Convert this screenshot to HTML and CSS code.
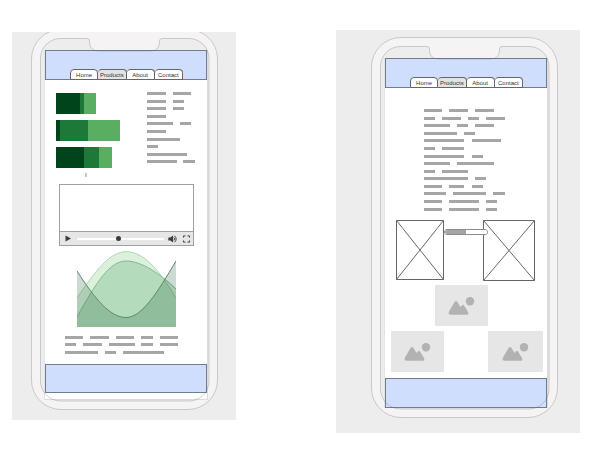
FILE: index.html
```html
<!DOCTYPE html>
<html lang="en">
<head>
<meta charset="utf-8">
<title>Mobile wireframes</title>
<link rel="stylesheet" href="styles.css">
</head>
<body>
<svg class="defs" aria-hidden="true">
  <symbol id="frame" viewBox="0 0 187 381" preserveAspectRatio="none">
    <path fill-rule="evenodd" d="M.5 30A29.500 29.500 0 0 1 30 .5H157A29.500 29.500 0 0 1 186.500 30V351A29.500 29.500 0 0 1 157 380.500H30A29.500 29.500 0 0 1 .5 351ZM9.500 29.500V352A20 20 0 0 0 29.500 372H158A20 20 0 0 0 178 352V29.500A20 20 0 0 0 158 9.500H131Q128.500 9.500 128.500 12Q129 22 119 22H68Q58 22 58.500 12Q58.500 9.500 56 9.500H29.500A20 20 0 0 0 9.500 29.500Z"/>
  </symbol>
  <symbol id="picture" viewBox="0 0 53 41">
    <path d="M14.500 29.500Q13 29 14 26.500L19.500 17Q21 14.800 22.500 17L25.500 22L27 20.300Q28 19.300 29 20.500L33 27Q34 29.500 32 29.800H15.500Z"/>
    <circle cx="35" cy="16.300" r="4.200"/>
  </symbol>
</svg>
<main class="canvas">
  <section class="artboard" aria-label="Products screen">
    <div class="phone phone-products">
      <svg class="shell" aria-hidden="true"><use href="#frame"/></svg>
      <div class="screen">
        <header class="bar">
          <nav class="tabs">
            <a class="tab" href="#home">Home</a>
            <a class="tab selected" href="#products">Products</a>
            <a class="tab" href="#about">About</a>
            <a class="tab" href="#contact">Contact</a>
          </nav>
        </header>
        <div class="summary">
          <svg class="bars" width="64" height="75" viewBox="0 0 64 75" role="img" aria-label="Stacked bars">
            <path class="g3" d="M0 0h24v21H0zM0 27h4v21H0zM0 54h28v21H0z"/>
            <path class="g2" d="M24 0h4v21h-4zM4 27h28v21H4zM28 54h15v21H28z"/>
            <path class="g1" d="M28 0h12v21H28zM32 27h32v21H32zM43 54h13v21H43z"/>
          </svg>
          <svg class="lines" width="48" height="77" viewBox="0 0 48 77" aria-hidden="true">
            <path d="M0 1.500h19m7 0h18M0 9.500h19m7 0h11M0 16.500h19m7 0h11M0 24.500h19M0 31.500h26m7 0h11M0 39.500h19M0 47.500h33M0 54.500h11M0 62.500h40M0 69.500h30m6 0h12"/>
          </svg>
        </div>
        <div class="caret">I</div>
        <div class="player">
          <div class="picture-area"></div>
          <div class="controls">
            <button class="icon" aria-label="Play"><svg width="6" height="7" viewBox="0 0 6 7"><path d="M.5 .5L6 3.500L.5 6.500z"/></svg></button>
            <input class="seek" type="range" min="0" max="100" value="48" aria-label="Position">
            <button class="icon" aria-label="Volume"><svg width="9" height="8" viewBox="0 0 9 8"><path d="M.3 2.600h2L5 .5v7L2.300 5.400h-2z"/><path class="wave" d="M5.900 2.500q1.300 1.500 0 3M6.500 .8q3.300 3.200 0 6.400"/></svg></button>
            <button class="icon" aria-label="Full screen"><svg width="7" height="8" viewBox="0 0 7 8"><path class="wave" d="M.5 2.500V.9h2M4.500 .9h2v1.600M6.500 5.500v1.600h-2M2.500 7.100h-2V5.500"/></svg></button>
          </div>
        </div>
        <svg class="area" width="99" height="76" viewBox="0 0 99 76" role="img" aria-label="Area chart">
          <path class="fill-light" d="M0 47C19 19 33 .7 49 .7S80 15 99 47V76H0z"/>
          <path class="edge-light" d="M0 47C19 19 33 .7 49 .7S80 15 99 47"/>
          <path class="fill-mid" d="M0 66C20 30 33 10 49 10S83 23 99 38V76H0z"/>
          <path class="edge-mid" d="M0 66C20 30 33 10 49 10S83 23 99 38"/>
          <path class="fill-dark" d="M0 20C18 48 33 66.500 49 66.500S80 42 99 10V76H0z"/>
          <path class="edge-dark" d="M0 20C18 48 33 66.500 49 66.500S80 42 99 10"/>
        </svg>
        <svg class="lines copy" width="113" height="18" viewBox="0 0 113 18" aria-hidden="true">
          <path d="M0 1.500h18m7 0h19m7 0h18m7 0h12m7 0h18M0 8.500h11m7 0h19m7 0h26m6 0h12m7 0h18M0 16.500h33m7 0h11m7 0h41"/>
        </svg>
        <footer class="bar foot"></footer>
      </div>
      <svg class="shell outline" aria-hidden="true"><use href="#frame"/></svg>
    </div>
  </section>

  <section class="artboard" aria-label="About screen">
    <div class="phone phone-gallery">
      <svg class="shell" aria-hidden="true"><use href="#frame"/></svg>
      <div class="screen">
        <header class="bar">
          <nav class="tabs">
            <a class="tab" href="#home">Home</a>
            <a class="tab selected" href="#products">Products</a>
            <a class="tab" href="#about">About</a>
            <a class="tab" href="#contact">Contact</a>
          </nav>
        </header>
        <svg class="lines article" width="81" height="102" viewBox="0 0 81 102" aria-hidden="true">
          <path d="M0 1.500h18m7 0h19m7 0h19M0 9.500h11m7 0h19m7 0h11m7 0h19M0 16.500h26m7 0h11m7 0h19M0 24.500h33m7 0h11M0 31.500h40m8 0h29M0 39.500h11m7 0h22M0 47.500h40m8 0h11M0 54.500h26m7 0h37M0 62.500h11m7 0h26M0 69.500h44m7 0h11M0 77.500h18m7 0h15m8 0h11M0 84.500h22m7 0h33m7 0h12M0 92.500h18m7 0h30m7 0h11M0 100.500h18m7 0h30m7 0h11"/>
        </svg>
        <div class="compare">
          <svg class="cross" width="48" height="60" viewBox="0 0 48 60" role="img" aria-label="Image placeholder"><path d="M.5 .5h47v59H.5zL47.500 59.500M47.500 .5L.5 59.500"/></svg>
          <progress class="progress" value="50" max="100" aria-label="Progress"></progress>
          <svg class="cross" width="52" height="61" viewBox="0 0 52 61" role="img" aria-label="Image placeholder"><path d="M.5 .5h51v60H.5zL51.500 60.500M51.500 .5L.5 60.500"/></svg>
        </div>
        <div class="gallery">
          <div class="thumb top"><svg width="53" height="41"><use href="#picture"/></svg></div>
          <div class="thumb left"><svg width="53" height="41"><use href="#picture"/></svg></div>
          <div class="thumb right"><svg width="53" height="41"><use href="#picture"/></svg></div>
        </div>
        <footer class="bar foot"></footer>
      </div>
      <svg class="shell outline" aria-hidden="true"><use href="#frame"/></svg>
    </div>
  </section>
</main>
</body>
</html>
```
FILE: styles.css
```css
* { box-sizing: border-box; }

body {
  margin: 0;
  background: #fff;
  font-family: "Liberation Sans", Arial, sans-serif;
  font-size: 6px;
  color: #333;
}

svg { display: block; flex: none; }

.defs { position: absolute; width: 0; height: 0; }

.canvas {
  display: grid;
  grid-template-columns: 224fr 244fr;
  column-gap: 100px;
  align-items: start;
  padding: 30px 14px 19px 12px;
}

.artboard {
  background: #ededed;
  overflow: hidden;
}
.artboard:first-child { margin-top: 2px; }

/* Device */
.phone {
  position: relative;
  padding: 21px 11px 10px 14px;
}
.phone-products { margin: -3px 18px 10px 19px; }
.phone-gallery { margin: 7px 22px 15px 35px; }

.shell {
  position: absolute;
  inset: 0;
  width: 100%;
  height: 100%;
  fill: #f5f3f4;
}
.outline {
  fill: none;
  stroke: rgb(90 90 90 / 26%);
  pointer-events: none;
}

.screen {
  position: relative;
  display: flex;
  flex-direction: column;
  background: #fff;
  box-shadow: 1px 0 #dcdcdc, -1px 0 #e4e4e4;
}
.phone-products .screen {
  padding-bottom: 6px;
  border-bottom: 1px solid #dcdcdc;
}

/* Header and footer */
.bar {
  height: 30px;
  border: 1px solid #737b90;
  background: #d0defd;
}
.foot { height: 29px; }
.phone-gallery .foot { height: 30px; }

.tabs {
  display: grid;
  grid-template-columns: repeat(4, 1fr);
  margin: 18px 23px 0 24px;
}
.tab {
  height: 11px;
  border: 1px solid #666;
  border-left-width: 0;
  border-radius: 4px 4px 0 0;
  background: #fff;
  color: #333;
  line-height: 10px;
  text-align: center;
  text-decoration: none;
}
.tab:first-child { border-left-width: 1px; }
.tab.selected { background: #e3e3e3; }

/* Placeholder copy */
.lines { stroke: #a6a6a6; stroke-width: 3; fill: none; }

/* Products screen */
.summary {
  display: flex;
  align-items: center;
  justify-content: space-between;
  margin: 12px 12px 0 11px;
}
.g1 { fill: #5aae61; }
.g2 { fill: #1c7938; }
.g3 { fill: #00441b; }

.caret {
  margin: 3px 0 6px 40px;
  line-height: 6px;
  color: #444;
}

.player {
  margin: 0 13px 0 14px;
  border: 1px solid #a0a0a0;
}
.picture-area { height: 46px; background: #fff; }
.controls {
  display: flex;
  align-items: center;
  height: 14px;
  padding: 0 3px 0 5px;
  border-top: 1px solid #a0a0a0;
  background: #e6e6e6;
}
.icon {
  flex: none;
  padding: 0;
  border: 0;
  background: none;
  fill: #3c3c3c;
}
.icon:last-child { margin-left: 6px; }
.wave { fill: none; stroke: #3c3c3c; }

.seek {
  flex: 1;
  min-width: 0;
  height: 6px;
  margin: 0 4px 0 6px;
  appearance: none;
  background: linear-gradient(#fff, #fff) center / 100% 2px no-repeat;
}
.seek::-webkit-slider-thumb {
  appearance: none;
  width: 5px;
  height: 5px;
  border-radius: 50%;
  background: #3c3c3c;
}

.area { margin: 5px 0 0 32px; fill: none; }
.fill-light { fill: rgb(120 200 120 / 26%); }
.fill-mid { fill: rgb(35 139 69 / 21%); }
.fill-dark { fill: rgb(0 68 27 / 20%); }
.edge-light { stroke: #b0d8b3; }
.edge-mid { stroke: #85b893; }
.edge-dark { stroke: #5c8a70; }

.copy { margin: 9px 0 10px 20px; }

/* Gallery screen */
.article { margin: 21px 0 0 39px; }

.compare {
  display: flex;
  align-items: flex-start;
  margin: 9px 12px 0 11px;
}
.cross { fill: #fff; stroke: #666; }
.progress {
  position: relative;
  flex: 1;
  min-width: 0;
  height: 6px;
  margin: 9px -5px 0 0;
  appearance: none;
  border: 1px solid #8c8c8c;
  border-radius: 3px;
  background: #fff;
  overflow: hidden;
}
.progress::-webkit-progress-bar { background: #fff; }
.progress::-webkit-progress-value { background: #a6a6a6; }

.gallery {
  display: grid;
  grid-template-columns: 44fr 53fr 55fr;
  row-gap: 5px;
  margin: 4px 4px 6px 6px;
}
.thumb {
  display: flex;
  justify-content: center;
  background: #e6e6e6;
  fill: #b2b2b2;
}
.top { grid-column: 2; }
.left { grid-area: 2 / 1 / 3 / 3; justify-self: start; }
.right { grid-area: 2 / 3; }
```
